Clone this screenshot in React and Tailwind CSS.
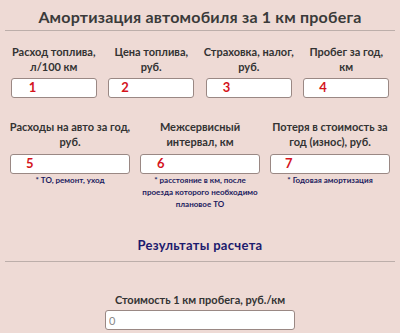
import React from "react";

const topFields = [
  { label: ["Расход топлива,", "л/100 км"], mark: "1", pad: "pl-[17px]" },
  { label: ["Цена топлива,", "руб."], mark: "2", pad: "pl-[12px]" },
  { label: ["Страховка, налог,", "руб."], mark: "3", pad: "pl-[16px]" },
  { label: ["Пробег за год,", "км"], mark: "4", pad: "pl-[15px]" },
];

const midFields = [
  {
    label: ["Расходы на авто за год,", "руб."],
    mark: "5",
    pad: "pl-[15px]",
    note: ["* ТО, ремонт, уход"],
  },
  {
    label: ["Межсервисный", "интервал, км"],
    mark: "6",
    pad: "pl-[16px]",
    note: ["* расстояние в км, после", "проезда которого необходимо", "плановое ТО"],
  },
  {
    label: ["Потеря в стоимость за", "год (износ), руб."],
    mark: "7",
    pad: "pl-[14px]",
    note: ["* Годовая амортизация"],
  },
];

const Box = ({ mark, pad, width }) => (
  <div
    className={`${width} h-[20px] bg-white border border-[#9a8884] rounded-[3px] flex items-center ${pad} text-[13px] font-bold text-[#d4141c]`}
  >
    {mark}
  </div>
);

export default function App() {
  return (
    <div
      className="w-[400px] h-[333px] bg-[#eedad5] overflow-hidden px-[5px] text-[#333]"
      style={{ fontFamily: "Lato, 'Open Sans', sans-serif" }}
    >
      {/* Title */}
      <h1 className="pt-[6px] text-center text-[16px] font-bold leading-[22px] text-[#3a3a3a] tracking-[0.2px]">
        Амортизация автомобиля за 1 км пробега
      </h1>
      <div className="mt-[2px] border-t border-[#bcaeaa]" />

      {/* Row 1 */}
      <div className="grid grid-cols-4 mt-[13px]">
        {topFields.map((f) => (
          <div key={f.mark} className="flex flex-col items-center">
            <div className="text-[11px] font-bold leading-[15px] text-center text-[#333] whitespace-nowrap">
              {f.label[0]}
              <br />
              {f.label[1]}
            </div>
            <div className="mt-[4px]">
              <Box mark={f.mark} pad={f.pad} width="w-[86px]" />
            </div>
          </div>
        ))}
      </div>

      {/* Row 2 */}
      <div className="grid grid-cols-3 mt-[21px]">
        {midFields.map((f) => (
          <div key={f.mark} className="flex flex-col items-center">
            <div className="text-[11px] font-bold leading-[15px] text-center text-[#333] whitespace-nowrap">
              {f.label[0]}
              <br />
              {f.label[1]}
            </div>
            <div className="mt-[5px]">
              <Box mark={f.mark} pad={f.pad} width="w-[120px]" />
            </div>
            <div className="text-[8px] font-bold leading-[12px] text-center text-[#1c1a5e]">
              {f.note.map((n) => (
                <div key={n}>{n}</div>
              ))}
            </div>
          </div>
        ))}
      </div>

      {/* Results */}
      <h2 className="mt-[26px] text-center text-[13px] font-bold leading-[18px] text-[#1c1a6e] tracking-[0.3px]">
        Результаты расчета
      </h2>
      <div className="mt-[7px] border-t border-[#bcaeaa]" />

      <div className="mt-[30px] flex flex-col items-center">
        <div className="text-[11px] font-bold leading-[15px] text-[#333]">
          Стоимость 1 км пробега, руб./км
        </div>
        <input
          readOnly
          placeholder="0"
          className="mt-[3px] w-[190px] h-[20px] bg-white border border-[#9a8884] rounded-[3px] px-[3px] text-[11px] text-[#555] placeholder:text-[#888] outline-none"
        />
      </div>
    </div>
  );
}
